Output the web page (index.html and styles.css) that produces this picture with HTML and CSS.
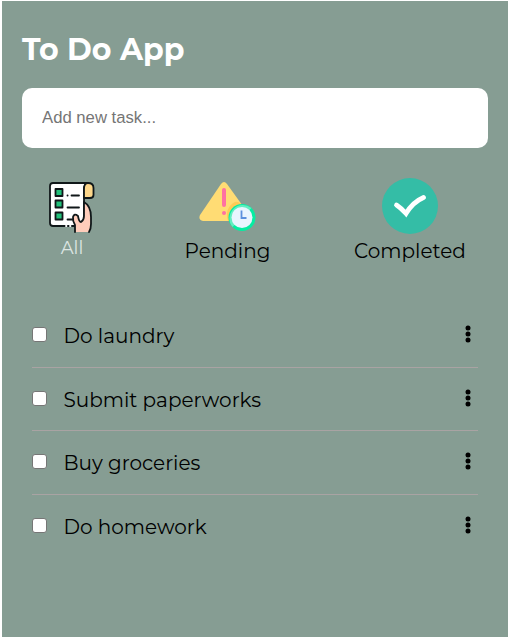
FILE: index.html
```html
<!DOCTYPE html>
<html lang="en">
<head>
<meta charset="utf-8">
<title>To Do App</title>
<link rel="stylesheet" href="styles.css">
</head>
<body>
<main class="app">
  <h1 class="title">To Do App</h1>
  <input class="new-task" type="text" placeholder="Add new task...">
  <nav class="filters">
    <a class="filter filter-all">
      <svg width="50" height="54" viewBox="0 0 50 54" fill="none" stroke="#101719" stroke-width="1.800" stroke-linecap="round" stroke-linejoin="round">
        <path fill="#fff" d="M5 2H40Q36 3 36 8V45H5Q2 45 2 42V5Q2 2 5 2Z"/>
        <path fill="#fdd78b" d="M40 2Q45.500 2 45.500 7V14Q45.500 17 42 17H36V8Q36 2 40 2Z"/>
        <path fill="#ffcdbb" stroke="none" d="M27 51V44Q24.500 40 25 36Q26 32 30 35Q31 41 33 41Q36 39 36 35V21Q43 25 43 36V43Q43 48 41 51Z"/>
        <path d="M27 51V44Q24.500 40 25 36Q26 32 30 35Q31 41 33 41Q36 39 36 35V21Q43 25 43 36V43Q43 48 41 51"/>
        <path fill="#23c17b" d="M7.500 8H14.500V15H7.500ZM7.500 19.500H14.500V26.500H7.500ZM7.500 31.500H14.500V38.500H7.500Z"/>
        <path d="M19.500 14.500H19.600M23.500 14.500H31M19.500 26.500H31M19.500 38.500H24.500"/>
        <path stroke="#fff" d="M18 45H18.500M22 45H22.500"/>
      </svg>
      <span class="label">All</span>
    </a>
    <a class="filter filter-pending">
      <svg width="58" height="52" viewBox="0 0 58 52">
        <path fill="#ffdc74" d="M22 3Q25-1 28 3L51 35Q52 40 47 40H4Q-1 39 1 34Z"/>
        <path fill="#fecb56" d="M36 21Q39 20 42 23L51 35Q52 40 47 40H29Q25 27 36 21Z"/>
        <path stroke="#ff70a2" stroke-width="4" stroke-linecap="round" d="M25 9V24"/>
        <circle cx="25" cy="32" r="2" fill="#ff70a2"/>
        <circle cx="43" cy="36.5" r="13.5" fill="#05eda2"/>
        <path fill="#62eec0" d="M33.500 46A13.5 13.5 0 0 1 52.500 27Z"/>
        <circle cx="43" cy="36.5" r="10.500" fill="#e9f5ff"/>
        <path fill="none" stroke="#5c91de" stroke-width="1.800" d="M42.500 29.500V37H47.500"/>
      </svg>
      <span class="label">Pending</span>
    </a>
    <a class="filter filter-completed">
      <svg width="58" height="58" viewBox="0 0 58 58">
        <circle cx="29" cy="29" r="28" fill="#34bda6"/>
        <path fill="none" stroke="#fff" stroke-width="4.800" stroke-linecap="round" stroke-linejoin="miter" d="M15.5 28Q20 31 25 36.500Q32 25 42.500 20.500"/>
      </svg>
      <span class="label">Completed</span>
    </a>
  </nav>
  <ul class="tasks">
    <li class="task"><input class="check" type="checkbox"><span class="name">Do laundry</span><svg class="more" width="6" height="18" viewBox="0 0 6 18"><circle cx="3" cy="3" r="2.500"/><circle cx="3" cy="9" r="2.500"/><circle cx="3" cy="15" r="2.500"/></svg></li>
    <li class="task"><input class="check" type="checkbox"><span class="name">Submit paperworks</span><svg class="more" width="6" height="18" viewBox="0 0 6 18"><circle cx="3" cy="3" r="2.500"/><circle cx="3" cy="9" r="2.500"/><circle cx="3" cy="15" r="2.500"/></svg></li>
    <li class="task"><input class="check" type="checkbox"><span class="name">Buy groceries</span><svg class="more" width="6" height="18" viewBox="0 0 6 18"><circle cx="3" cy="3" r="2.500"/><circle cx="3" cy="9" r="2.500"/><circle cx="3" cy="15" r="2.500"/></svg></li>
    <li class="task"><input class="check" type="checkbox"><span class="name">Do homework</span><svg class="more" width="6" height="18" viewBox="0 0 6 18"><circle cx="3" cy="3" r="2.500"/><circle cx="3" cy="9" r="2.500"/><circle cx="3" cy="15" r="2.500"/></svg></li>
  </ul>
</main>
</body>
</html>
```
FILE: styles.css
```css
* { box-sizing: border-box; }
body { margin: 0; padding: 1px 3px 3px 2px; background: #fff; font-family: Montserrat, Inter, sans-serif; }
.app { height: 636px; padding: 29px 20px 0; background: #869d93; color: #000; }
.title { margin: 0 0 18px; height: 40px; line-height: 40px; font-size: 30px; font-weight: 700; color: #fff; white-space: nowrap; }
.new-task { display: block; width: 100%; height: 60px; padding: 0 20px; border: 0; border-radius: 10px; background: #fff; font: 16.7px "Liberation Sans", sans-serif; outline: 0; }
.new-task::placeholder { color: #757575; }
.filters { display: flex; justify-content: space-between; height: 156px; padding: 29px 22px 0 26px; }
.filter { display: flex; flex-direction: column; align-items: center; }
.filter svg { display: block; flex: none; }
.filter-all { width: 50px; padding-top: 4px; }
.filter-pending { width: 90px; padding-top: 4px; margin-left: 4px; }
.filter-completed { width: 112px; }
.label { font-size: 20px; line-height: 26px; font-weight: 400; white-space: nowrap; }
.filter-all .label { margin-right: 2px; font-size: 18px; color: #dde5e2; }
.filter-pending .label { margin: 5px 1px 0 0; }
.filter-completed .label { margin-top: 3px; }
.tasks { list-style: none; margin: 0; padding: 0 10px; }
.task { display: flex; align-items: center; height: 63.6px; padding: 2px 7px 0 0; border-bottom: 1px solid #a9a3a3; }
.task:last-child { border-bottom: 0; padding-top: 1px; }
.check { appearance: none; flex: none; width: 15px; height: 15px; margin: -3px 16.5px 0 0; border: 1px solid #767676; border-radius: 3px; background: #fff; }
.name { flex: 1; font-size: 20px; font-weight: 400; white-space: nowrap; }
.more { flex: none; margin-top: -4px; fill: #000; }
```
